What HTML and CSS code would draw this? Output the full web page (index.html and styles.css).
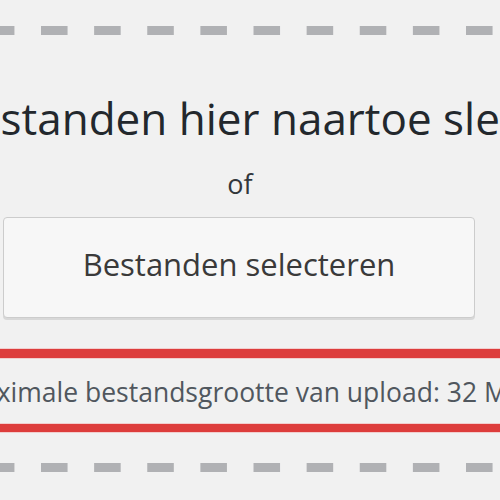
FILE: index.html
```html
<!DOCTYPE html>
<html lang="nl">
<head>
<meta charset="utf-8">
<title>Upload</title>
<link rel="stylesheet" href="styles.css">
</head>
<body>
<div class="dropzone">
  <div class="dash dash-top"></div>
  <div class="row heading-row"><h2 class="heading">Bestanden hier naartoe slepen</h2></div>
  <div class="row or-row"><p class="or">of</p></div>
  <div class="button-row"><button class="select-btn" type="button">Bestanden selecteren</button></div>
  <div class="redline redline-top"></div>
  <div class="row max-row"><p class="max">Maximale bestandsgrootte van upload: 32 MB.</p></div>
  <div class="redline redline-bottom"></div>
  <div class="dash dash-bottom"></div>
</div>
</body>
</html>
```
FILE: styles.css
```css
html, body {
  margin: 0;
  padding: 0;
  width: 500px;
  height: 500px;
  overflow: hidden;
  background: #f1f1f1;
  font-family: "Open Sans", "Noto Sans", sans-serif;
}
.dropzone {
  display: flex;
  flex-direction: column;
  padding-top: 26px;
}
.dash {
  height: 9px;
  background-image: linear-gradient(to right, #b0b1b4 0 26.5px, transparent 26.5px 100%);
  background-size: 53.125px 100%;
  background-repeat: repeat-x;
  background-position: 41px 0;
}
.row {
  display: flex;
  justify-content: center;
  width: 480px;
  white-space: nowrap;
}
.heading-row {
  padding-left: 23px;
}
.max-row {
  padding-left: 5px;
}
.heading {
  margin: 53px 0 0;
  font-size: 44px;
  line-height: 60px;
  font-weight: 400;
  color: #23282d;
}
.or {
  margin: 21px 0 0;
  font-size: 27px;
  line-height: 30px;
  color: #32373c;
}
.button-row {
  display: flex;
  padding: 0 25px 0 3px;
  margin-top: 18px;
}
.select-btn {
  flex: 1;
  box-sizing: border-box;
  height: 101px;
  padding: 26px 0 0;
  display: flex;
  justify-content: center;
  align-items: flex-start;
  font-family: inherit;
  font-size: 31px;
  line-height: 40px;
  color: #3a3a3a;
  background: #f7f7f7;
  border: 1px solid #cccccc;
  border-radius: 4px;
  box-shadow: 0 2px 0 #d8d8d8;
}
.redline {
  background: #dd3d3c;
  box-shadow: 0 0 0 1px rgba(240, 140, 140, 0.35);
}
.redline-top {
  margin-top: 31px;
  height: 9px;
}
.max {
  margin: 19px 0 0;
  font-size: 26.5px;
  line-height: 30px;
  color: #50575e;
}
.redline-bottom {
  margin-top: 17px;
  height: 8px;
}
.dash-bottom {
  margin-top: 31px;
}
```
